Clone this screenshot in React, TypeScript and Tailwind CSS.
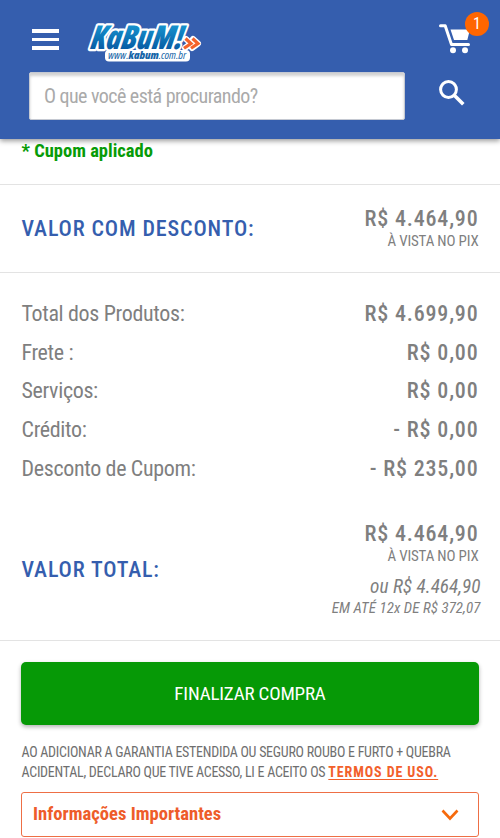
import { useState } from "react";

interface SummaryRow {
  label: string;
  value: string;
}

const rows: SummaryRow[] = [
  { label: "Total dos Produtos:", value: "R$ 4.699,90" },
  { label: "Frete :", value: "R$ 0,00" },
  { label: "Serviços:", value: "R$ 0,00" },
  { label: "Crédito:", value: "- R$ 0,00" },
  { label: "Desconto de Cupom:", value: "- R$ 235,00" },
];

const Logo = () => (
  <svg viewBox="0 0 116 44" className="h-11 w-[116px] overflow-visible" aria-label="KaBuM!">
    <defs>
      <linearGradient id="kabum" x1="0" y1="0" x2="0" y2="1">
        <stop offset="0.25" stopColor="#1593cf" />
        <stop offset="0.85" stopColor="#07569f" />
      </linearGradient>
    </defs>
    <rect x="18" y="30" width="85" height="11.500" rx="4" fill="#fff" />
    <text
      x="7" y="28.500" fontSize="33" textLength="92" lengthAdjust="spacingAndGlyphs"
      transform="skewX(-8)"
      fontFamily="Open Sans, sans-serif" fontWeight="800" fontStyle="italic"
      fill="url(#kabum)" stroke="#fff" strokeWidth="4.500" strokeLinejoin="round" paintOrder="stroke"
    >
      KaBuM!
    </text>
    <text
      x="21" y="38.500" fontSize="10" textLength="78" lengthAdjust="spacingAndGlyphs"
      fontFamily="Open Sans, sans-serif" fontStyle="italic" fill="#1766a8"
    >
      www.<tspan fontWeight="800">kabum</tspan>.com.br
    </text>
    <g fill="none" strokeLinejoin="round" strokeLinecap="round">
      <path d="M99 19l5 4.500-6 4.500M106 19l5 4.500-6 4.500" stroke="#fff" strokeWidth="6" />
      <path d="M98.500 18.500l5.500 5-7 4.800M105.500 18.500l5.500 5-7 4.800" stroke="#f4622a" strokeWidth="3.200" strokeLinecap="butt" strokeLinejoin="miter" />
    </g>
  </svg>
);

const CartIcon = () => (
  <svg viewBox="0 0 32 30" className="h-[30px] w-8" fill="none">
    <path d="M1.500 1.700H6.200L12.500 20.600H29.500" stroke="#fff" strokeWidth="3" strokeLinecap="round" strokeLinejoin="round" />
    <path d="M11.500 5.500H31L28.300 16H15Z" fill="#fff" />
    <circle cx="14" cy="26.300" r="3" fill="#fff" />
    <circle cx="26" cy="26.300" r="3" fill="#fff" />
  </svg>
);

const Header = () => (
  <header className="h-[139px] bg-[#355eae] shadow-[0_2px_5px_rgba(0,0,0,0.4)]">
    <div className="flex h-[72px] items-start pl-8 pr-[29px]">
      <button type="button" aria-label="Menu" className="mt-[29px] flex w-[27px] flex-col gap-[5px]">
        <span className="h-[3.500px] bg-white" />
        <span className="h-[3.500px] bg-white" />
        <span className="h-[3.500px] bg-white" />
      </button>
      <div className="ml-7 mt-5">
        <Logo />
      </div>
      <div className="relative ml-auto mt-6">
        <CartIcon />
        <span className="absolute -right-[18px] -top-3 flex size-6 items-center justify-center rounded-full bg-[#ff6600] text-[16px] text-white">
          1
        </span>
      </div>
    </div>
    <div className="flex items-start pl-[29px] pr-[35px]">
      <input
        placeholder="O que você está procurando?"
        className="h-12 w-[376px] rounded-[2px] border border-[#c5c9d2] bg-white px-3.5 pb-px text-[20px] tracking-[-0.550px] shadow-[inset_0_3px_3px_rgba(0,0,0,0.18)] placeholder:text-[#aaaaaa]"
      />
      <svg viewBox="0 0 26 26" className="ml-auto mt-2 size-[26px]" fill="none" stroke="#fff">
        <circle cx="9.500" cy="9.500" r="7.900" strokeWidth="3" />
        <path d="M15 15l9.300 9.300" strokeWidth="3.600" />
      </svg>
    </div>
  </header>
);

const PixPrice = () => (
  <div className="text-right">
    <p className="text-[22px] font-medium leading-[26px] tracking-[0.820px]">R$ 4.464,90</p>
    <p className="text-[15px] leading-[18px] tracking-[-0.180px]">À VISTA NO PIX</p>
  </div>
);

const App = () => {
  const [open, setOpen] = useState(false);

  return (
    <div className="h-[838px] w-[500px] overflow-hidden bg-white font-['Roboto_Condensed','Roboto',sans-serif] text-[#7f7f7f] font-stretch-condensed">
      <Header />
      <p className="h-[45px] pl-[21.500px] text-[18.500px] font-bold leading-6 text-[#079b07]">* Cupom aplicado</p>

      <section className="flex h-[89px] items-center justify-between border-y border-[#e3e3e3] pl-[21.500px] pr-[21.500px] pb-px">
        <h2 className="text-[22px] font-medium tracking-[0.870px] text-[#355eae]">VALOR COM DESCONTO:</h2>
        <PixPrice />
      </section>

      <section className="px-[21.500px] pt-[21px]">
        {rows.map((row) => (
          <div key={row.label} className="flex h-[38.700px] items-center justify-between text-[22px]">
            <span className="tracking-[-0.340px]">{row.label}</span>
            <span className="font-medium tracking-[0.820px]">{row.value}</span>
          </div>
        ))}
      </section>

      <section className="flex h-[154px] items-center justify-between border-b border-[#e3e3e3] px-[21.500px] pt-[11px]">
        <h2 className="mt-px text-[22px] font-medium tracking-[0.870px] text-[#355eae]">VALOR TOTAL:</h2>
        <div className="text-right">
          <PixPrice />
          <p className="-mr-0.5 mt-2.5 text-[19.300px] italic leading-6">ou R$ 4.464,90</p>
          <p className="-mr-0.5 text-[15px] italic leading-[18px] tracking-[0.050px]">EM ATÉ 12x DE R$ 372,07</p>
        </div>
      </section>

      <section className="px-[21px] pt-[21px]">
        <button type="button" className="h-[63px] w-full rounded-[5px] bg-[#069906] text-[19px] tracking-[-0.180px] text-white shadow-[0_2px_4px_rgba(0,0,0,0.3)]">
          FINALIZAR COMPRA
        </button>
        <p className="mt-[17px] whitespace-nowrap pl-[0.500px] text-[14px] leading-5 tracking-[-0.270px] text-[#6f6f6f]">
          AO ADICIONAR A GARANTIA ESTENDIDA OU SEGURO ROUBO E FURTO + QUEBRA
          <br />
          ACIDENTAL, DECLARO QUE TIVE ACESSO, LI E ACEITO OS{" "}
          <a href="#" className="font-bold tracking-[0.900px] text-[#f2602b] underline underline-offset-2">TERMOS DE USO.</a>
        </p>
        <button
          type="button"
          onClick={() => setOpen(!open)}
          className="mt-2.5 flex h-[45px] w-full items-center justify-between rounded-[3px] border-[1.500px] border-[#ee6f45] pl-[11px] pr-[19px] pt-px text-[18.600px] font-bold text-[#ee5c2a]"
        >
          Informações Importantes
          <svg viewBox="0 0 18 12" className={`h-3 w-[18px] ${open ? "rotate-180" : ""}`} fill="none">
            <path d="M1.500 1.500L9 9.500l7.500-8" stroke="#f66a0c" strokeWidth="2.600" />
          </svg>
        </button>
      </section>
    </div>
  );
};

export default App;
